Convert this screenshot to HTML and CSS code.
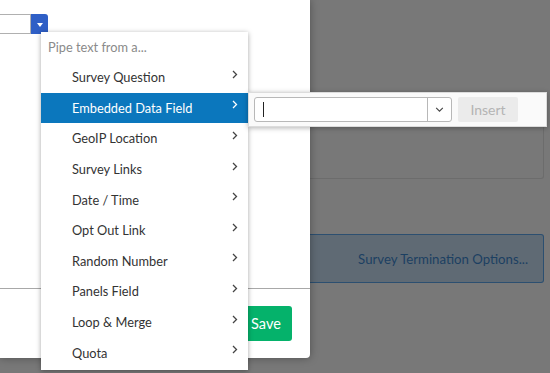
FILE: index.html
```html
<!DOCTYPE html>
<html>
<head>
<meta charset="utf-8">
<link rel="stylesheet" href="styles.css">
</head>
<body>
  <div class="modal">
    <div class="modal-top">
      <div class="pipe-input">
        <div class="pipe-field"></div>
        <div class="pipe-btn"><span class="tri"></span></div>
      </div>
    </div>
    <div class="modal-bottom">
      <div class="footer">
        <button class="save">Save</button>
      </div>
    </div>
  </div>
  <div class="page">
    <div class="box-one"></div>
    <div class="box-two">Survey Termination Options...</div>
  </div>

  <div class="menu">
    <div class="menu-head">Pipe text from a...</div>
    <div class="item"><span>Survey Question</span><svg class="chev" viewBox="0 0 6 9"><polyline points="1,1 4.5,4.5 1,8"/></svg></div>
    <div class="item active"><span>Embedded Data Field</span><svg class="chev" viewBox="0 0 6 9"><polyline points="1,1 4.5,4.5 1,8"/></svg></div>
    <div class="item"><span>GeoIP Location</span><svg class="chev" viewBox="0 0 6 9"><polyline points="1,1 4.5,4.5 1,8"/></svg></div>
    <div class="item"><span>Survey Links</span><svg class="chev" viewBox="0 0 6 9"><polyline points="1,1 4.5,4.5 1,8"/></svg></div>
    <div class="item"><span>Date / Time</span><svg class="chev" viewBox="0 0 6 9"><polyline points="1,1 4.5,4.5 1,8"/></svg></div>
    <div class="item"><span>Opt Out Link</span><svg class="chev" viewBox="0 0 6 9"><polyline points="1,1 4.5,4.5 1,8"/></svg></div>
    <div class="item"><span>Random Number</span><svg class="chev" viewBox="0 0 6 9"><polyline points="1,1 4.5,4.5 1,8"/></svg></div>
    <div class="item"><span>Panels Field</span><svg class="chev" viewBox="0 0 6 9"><polyline points="1,1 4.5,4.5 1,8"/></svg></div>
    <div class="item"><span>Loop &amp; Merge</span><svg class="chev" viewBox="0 0 6 9"><polyline points="1,1 4.5,4.5 1,8"/></svg></div>
    <div class="item"><span>Quota</span><svg class="chev" viewBox="0 0 6 9"><polyline points="1,1 4.5,4.5 1,8"/></svg></div>
  </div>

  <div class="submenu">
    <div class="combo">
      <div class="combo-text"><span class="caret"></span></div>
      <div class="combo-btn"><svg viewBox="0 0 10 6"><polyline points="1,1 5,5 9,1"/></svg></div>
    </div>
    <button class="insert">Insert</button>
  </div>
</body>
</html>
```

FILE: styles.css
```css
html, body {
  margin: 0;
  padding: 0;
}
body {
  width: 550px;
  height: 373px;
  overflow: hidden;
  background: #787878;
  display: flex;
  align-items: flex-start;
  font-family: "Lato", "Open Sans", sans-serif;
  position: relative;
}

.modal {
  width: 310px;
  height: 358px;
  background: #fff;
  border-bottom-right-radius: 4px;
  box-shadow: 0 0 8px rgba(0, 0, 0, 0.35);
  display: flex;
  flex-direction: column;
  position: relative;
  z-index: 2;
  flex-shrink: 0;
}
.modal-top {
  padding-top: 14px;
  height: 274px;
}
.pipe-input {
  display: flex;
  height: 20px;
}
.pipe-field {
  width: 31px;
  box-sizing: border-box;
  border: 1px solid #b0b0b0;
  border-left: none;
  background: #fff;
}
.pipe-btn {
  width: 17px;
  background: #2f5fc6;
  border-top-right-radius: 3px;
  display: flex;
  align-items: center;
  justify-content: center;
}
.tri {
  width: 0;
  height: 0;
  border-left: 3px solid transparent;
  border-right: 3px solid transparent;
  border-top: 4px solid #fff;
  margin-top: 1px;
}
.modal-bottom {
  border-top: 1px solid #a8a8a8;
  flex: 1;
}
.footer {
  display: flex;
  justify-content: flex-end;
  padding: 17px 18px 0 0;
}
.save {
  width: 52px;
  height: 35px;
  border: none;
  border-radius: 3px;
  background: #05b26b;
  color: #fff;
  font-family: inherit;
  font-size: 14.5px;
  text-align: center;
  padding: 0;
}

.page {
  flex: 1;
  padding: 110px 6px 0 0;
  display: flex;
  flex-direction: column;
}
.box-one {
  height: 67px;
  border: 1px solid #6c6c6c;
  border-left: none;
  border-radius: 0 3px 3px 0;
}
.box-two {
  margin-top: 55px;
  height: 47px;
  border: 1px solid #2c4f70;
  border-left: none;
  border-radius: 0 3px 3px 0;
  background: #5f6a74;
  color: #1c4062;
  font-size: 13.2px;
  display: flex;
  align-items: center;
  justify-content: flex-end;
  padding-right: 15px;
}

.menu {
  position: absolute;
  left: 41px;
  top: 32px;
  width: 207px;
  height: 338px;
  background: #fff;
  box-shadow: 0 1px 5px rgba(0, 0, 0, 0.35);
  z-index: 3;
  font-size: 12.8px;
  color: #333;
}
.menu-head {
  height: 30px;
  line-height: 30px;
  padding-left: 7px;
  color: #8a8a8a;
}
.item {
  height: 30.6px;
  display: flex;
  align-items: center;
  padding-left: 31px;
  padding-right: 10px;
  position: relative;
}
.item span {
  flex: 1;
}
.item.active {
  background: #0b77bd;
  color: #fff;
}
.chev {
  width: 6px;
  height: 9px;
  margin-top: -6px;
  fill: none;
  stroke: #444;
  stroke-width: 1.3;
}
.item.active .chev {
  stroke: #fff;
}

.submenu {
  position: absolute;
  left: 248px;
  top: 92px;
  width: 299px;
  height: 35px;
  box-sizing: border-box;
  background: #fafafa;
  border: 1px solid #dcdcdc;
  box-shadow: 0 1px 5px rgba(0, 0, 0, 0.3);
  z-index: 4;
  display: flex;
  align-items: center;
  padding: 0 6px 0 5px;
}
.combo {
  display: flex;
  width: 198px;
  height: 25px;
  box-sizing: border-box;
  border: 1px solid #b8b8b8;
  border-radius: 3px;
  background: #fff;
}
.combo-text {
  flex: 1;
  display: flex;
  align-items: center;
  padding-left: 8px;
}
.caret {
  width: 1px;
  height: 15px;
  background: #222;
}
.combo-btn {
  width: 23px;
  border-left: 1px solid #b8b8b8;
  display: flex;
  align-items: center;
  justify-content: center;
}
.combo-btn svg {
  width: 9px;
  height: 5px;
  fill: none;
  stroke: #444;
  stroke-width: 1.3;
}
.insert {
  margin-left: 6px;
  width: 60px;
  height: 25px;
  border: none;
  border-radius: 2px;
  background: #ebebeb;
  color: #b4b4b4;
  font-family: inherit;
  font-size: 14px;
  padding: 0;
}
```
